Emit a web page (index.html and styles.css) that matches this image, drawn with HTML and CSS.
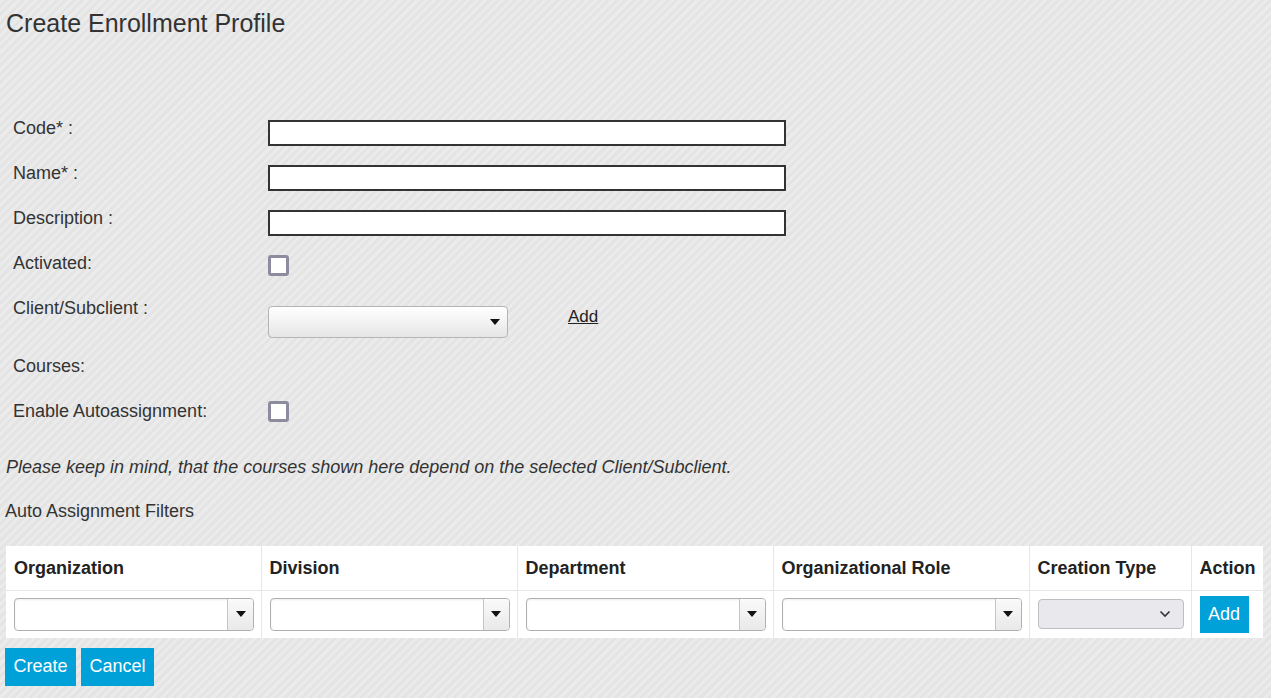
FILE: index.html
```html
<!DOCTYPE html>
<html lang="en">
<head>
<meta charset="utf-8">
<title>Create Enrollment Profile</title>
<link rel="stylesheet" href="styles.css">
</head>
<body>
<div class="page">
  <h1 class="title">Create Enrollment Profile</h1>

  <div class="form">
    <div class="row">
      <label class="lbl">Code* :</label>
      <input class="txt" type="text">
    </div>
    <div class="row">
      <label class="lbl">Name* :</label>
      <input class="txt" type="text">
    </div>
    <div class="row">
      <label class="lbl">Description :</label>
      <input class="txt" type="text">
    </div>
    <div class="row">
      <label class="lbl">Activated:</label>
      <span class="chk"></span>
    </div>
    <div class="row row-client">
      <label class="lbl">Client/Subclient :</label>
      <div class="gsel"><span class="caret"></span></div>
      <a class="addlink" href="#">Add</a>
    </div>
    <div class="row">
      <label class="lbl">Courses:</label>
    </div>
    <div class="row row-auto">
      <label class="lbl">Enable Autoassignment:</label>
      <span class="chk chk-auto"></span>
    </div>
  </div>

  <p class="note">Please keep in mind, that the courses shown here depend on the selected Client/Subclient.</p>
  <p class="sub">Auto Assignment Filters</p>

  <table class="filters">
    <thead>
      <tr>
        <th class="c-first">Organization</th>
        <th class="c-w">Division</th>
        <th class="c-w">Department</th>
        <th class="c-w">Organizational Role</th>
        <th class="c-type">Creation Type</th>
        <th class="c-act">Action</th>
      </tr>
    </thead>
    <tbody>
      <tr>
        <td><div class="combo"><span class="combo-in"></span><span class="combo-btn"><span class="caret"></span></span></div></td>
        <td><div class="combo"><span class="combo-in"></span><span class="combo-btn"><span class="caret"></span></span></div></td>
        <td><div class="combo"><span class="combo-in"></span><span class="combo-btn"><span class="caret"></span></span></div></td>
        <td><div class="combo"><span class="combo-in"></span><span class="combo-btn"><span class="caret"></span></span></div></td>
        <td><div class="nsel"><svg class="chev" width="12" height="8" viewBox="0 0 12 8"><path d="M1.5 1.5 L6 6 L10.5 1.5" fill="none" stroke="#333" stroke-width="1.6"/></svg></div></td>
        <td><button class="btn btn-sm" type="button">Add</button></td>
      </tr>
    </tbody>
  </table>

  <div class="actions">
    <button class="btn" type="button">Create</button>
    <button class="btn" type="button">Cancel</button>
  </div>
</div>
</body>
</html>
```

FILE: styles.css
```css
html, body {
  margin: 0;
  padding: 0;
  height: 100%;
}
body {
  font-family: "Liberation Sans", Arial, sans-serif;
  font-size: 18px;
  color: #333;
  background-color: #e8e8e8;
  background-image: repeating-linear-gradient(135deg, #ebebeb 0px, #ebebeb 3px, #e4e4e4 3px, #e4e4e4 6px);
}
.page {
  padding: 8px 8px 0 5px;
}
.title {
  margin: 0 0 0 1px;
  font-size: 25px;
  font-weight: normal;
  line-height: 30px;
  color: #333;
}
.form {
  margin-top: 80px;
  padding-left: 8px;
}
.row {
  display: flex;
  align-items: flex-start;
  height: 45px;
}
.row-client {
  height: 58px;
}
.row-auto {
  height: 56px;
}
.lbl {
  width: 255px;
  flex: none;
  line-height: 20px;
}
.txt {
  margin: 2px 0 0 0;
  width: 518px;
  height: 26px;
  box-sizing: border-box;
  border: 2px solid #333;
  border-radius: 0;
  background: #fff;
  padding: 0 4px;
}
.chk {
  display: block;
  margin-top: 2px;
  width: 21px;
  height: 21px;
  box-sizing: border-box;
  border: 3px solid #8d8c9e;
  border-radius: 3px;
  background: #fff;
}
.chk-auto {
  margin-top: 0;
}
.gsel {
  margin-top: 8px;
  width: 240px;
  height: 32px;
  box-sizing: border-box;
  border: 1px solid #b4b4b4;
  border-radius: 4px;
  background: linear-gradient(#ffffff, #e6e6e6);
  display: flex;
  align-items: center;
  justify-content: flex-end;
  padding-right: 7px;
}
.caret {
  display: block;
  width: 0;
  height: 0;
  border-left: 5px solid transparent;
  border-right: 5px solid transparent;
  border-top: 6px solid #111;
}
.addlink {
  margin: 9px 0 0 60px;
  font-size: 17px;
  color: #222;
  text-decoration: underline;
  line-height: 20px;
}
.note {
  margin: 0;
  padding-left: 1px;
  font-style: italic;
  line-height: 20px;
}
.sub {
  margin: 24px 0 0 0;
  line-height: 20px;
}
.filters {
  margin: 25px 0 0 1px;
  width: 1257px;
  border-collapse: collapse;
  background: #fff;
  table-layout: fixed;
}
.filters th, .filters td {
  border: 1px solid #e6e6e6;
  padding: 0 8px;
  text-align: left;
}
.filters tr:first-child th { border-top: none; }
.filters th:first-child, .filters td:first-child { border-left: none; }
.filters th:last-child, .filters td:last-child { border-right: none; }
.filters tbody tr td { border-bottom: none; }
.filters th {
  height: 44px;
  font-weight: bold;
  font-size: 18px;
  color: #222;
  padding-top: 1px;
  box-sizing: border-box;
}
.filters td {
  height: 47px;
}
.c-first { width: 255px; }
.c-w { width: 256px; }
.c-type { width: 162px; }
.c-act { width: 72px; }
.combo {
  display: flex;
  width: 240px;
  height: 33px;
  box-sizing: border-box;
  border: 1px solid #b0b0b0;
  border-radius: 4px;
  overflow: hidden;
  background: #fff;
  box-shadow: inset 0 1px 2px rgba(0,0,0,0.08);
}
.combo-in {
  flex: 1;
}
.combo-btn {
  width: 25px;
  border-left: 1px solid #c4c4c4;
  background: linear-gradient(#fafafa, #e9e9e9);
  display: flex;
  align-items: center;
  justify-content: center;
}
.nsel {
  width: 146px;
  height: 30px;
  box-sizing: border-box;
  border: 1px solid #bdbdc3;
  border-radius: 4px;
  background: #e9e9ed;
  display: flex;
  align-items: center;
  justify-content: flex-end;
  padding-right: 12px;
}
.chev { display: block; }
.btn {
  font-family: "Liberation Sans", Arial, sans-serif;
  font-size: 18px;
  color: #fff;
  background: #00a1d9;
  border: none;
  border-radius: 0;
  height: 38px;
  padding: 0 8.5px;
  margin: 0;
}
.btn-sm {
  height: 37px;
  display: block;
}
.actions {
  display: flex;
  gap: 5px;
  margin-top: 10px;
}
```
